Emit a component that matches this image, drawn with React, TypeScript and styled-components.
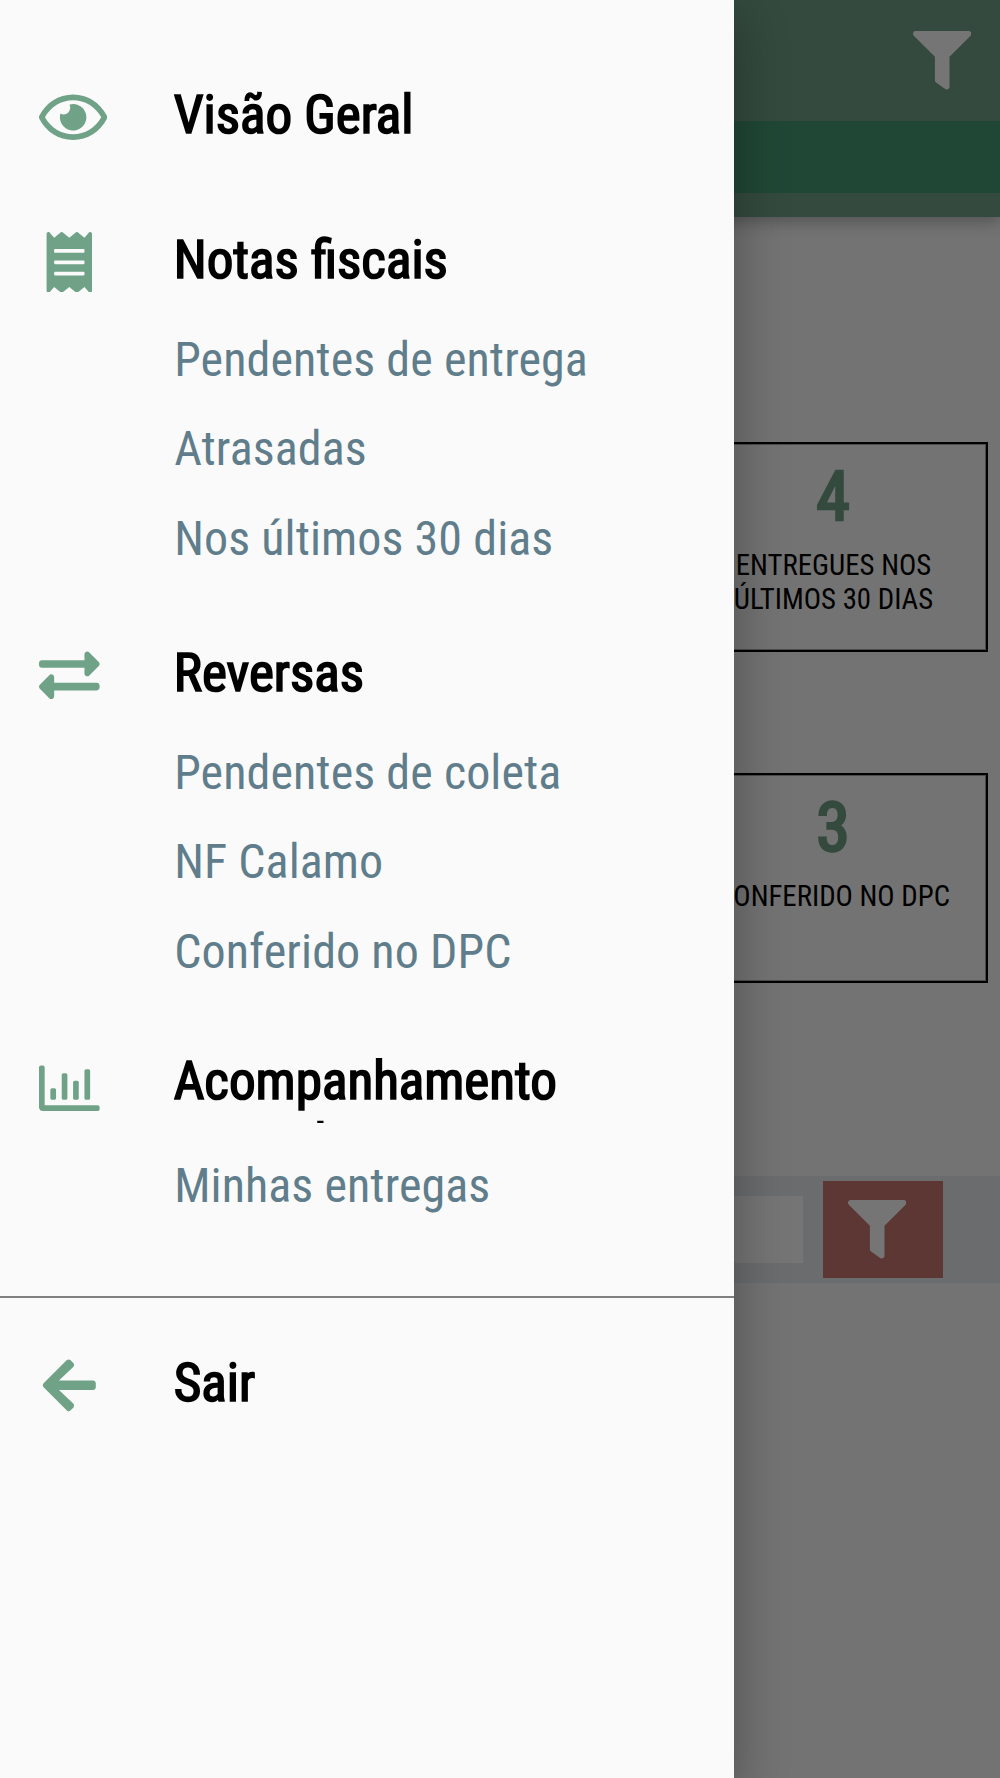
import React from "react";
import styled, { createGlobalStyle } from "styled-components";
import {
  FaArrowLeft,
  FaExchangeAlt,
  FaFilter,
  FaReceipt,
  FaRegChartBar,
  FaRegEye,
} from "react-icons/fa";

const green = "#70a288";

const GlobalStyle = createGlobalStyle`
  * { box-sizing: border-box; }
  body {
    margin: 0;
    font-family: "Roboto Condensed", Roboto, "Liberation Sans", sans-serif;
  }
  svg { display: block; flex: none; }
`;

const Screen = styled.div`
  position: relative;
  width: 1000px;
  height: 1778px;
  overflow: hidden;
  background: #fafafa;
`;

/* page behind the drawer */

const Page = styled.main`
  height: 100%;
  display: flex;
  flex-direction: column;
`;

const Header = styled.header`
  flex: none;
  height: 217.4px;
  background: #71a187;
  box-shadow: 0 4px 16px rgba(0, 0, 0, 0.3);
`;

const Toolbar = styled.div`
  height: 121px;
  display: flex;
  align-items: center;
  justify-content: flex-end;
  padding-right: 28.8px;
  color: #fff;
`;

const Band = styled.div`
  height: 72px;
  background: #469c75;
`;

const Cards = styled.section`
  display: flex;
  flex-direction: column;
  align-items: flex-end;
  gap: 121px;
  padding: 224.6px 12px 0 0;
`;

const Card = styled.article`
  width: 310px;
  height: 210px;
  padding-top: 13px;
  border: 2px solid #000;
  box-shadow: inset 0 0 0 1px rgba(0, 0, 0, 0.35);
  text-align: center;
`;

const Count = styled.div`
  font-size: 68px;
  line-height: 80px;
  font-weight: 400;
  color: #71a187;
  -webkit-text-stroke: 2.6px #71a187;
`;

const Caption = styled.div`
  width: 240px;
  margin: 12px auto 0;
  padding-left: 1px;
  font-size: 28.8px;
  line-height: 33.8px;
  color: #000;
`;

const SearchBar = styled.div`
  flex: none;
  height: 107px;
  margin-top: 193px;
  display: flex;
  align-items: center;
  justify-content: flex-end;
  padding-right: 57px;
  gap: 19.5px;
  background: #e9ecef;
`;

const SearchField = styled.div`
  width: 300px;
  height: 67.5px;
  background: #fff;
`;

const FilterButton = styled.div`
  width: 120.3px;
  height: 97px;
  padding: 19.5px 0 0 25px;
  background: #c8786f;
  color: #fff;
`;

const Overlay = styled.div`
  position: absolute;
  inset: 0;
  background: rgba(0, 0, 0, 0.54);
`;

/* drawer */

const Drawer = styled.nav`
  position: absolute;
  top: 0;
  left: 0;
  width: 734.3px;
  height: 100%;
  padding-top: 63.5px;
  background: #fafafa;
  box-shadow: 0 16px 48px 2px rgba(0, 0, 0, 0.3);
`;

const Section = styled.section`
  margin-bottom: 38.5px;
`;

const Heading = styled.div`
  height: 106.4px;
  display: flex;
  align-items: center;
  padding-left: 39px;
`;

const IconBox = styled.span<{ $wide?: boolean }>`
  width: 61px;
  margin-right: 73.7px;
  padding-top: 0.6px;
  display: flex;
  justify-content: ${(p) => (p.$wide ? "flex-start" : "center")};
  color: ${green};
`;

const EyeIcon = styled(FaRegEye)`
  width: 68.2px;
  height: 60.6px;
`;

const Title = styled.h2`
  width: 400px;
  max-height: 72.8px;
  margin: 0 0 2.4px;
  overflow: hidden;
  font-size: 53.2px;
  line-height: 62.6px;
  font-weight: 400;
  color: #000;
  -webkit-text-stroke: 1.7px #000;
`;

const Item = styled.div`
  height: 89.4px;
  padding-left: 174.2px;
  font-size: 48px;
  line-height: 89.4px;
  letter-spacing: 0.09px;
  color: #607d8b;
`;

const Divider = styled.hr`
  height: 2px;
  margin: 65.6px 0 33.8px;
  border: 0;
  background: #808080;
`;

type MenuSection = {
  title: string;
  icon: React.ReactNode;
  wideIcon?: boolean;
  items: string[];
};

const menu: MenuSection[] = [
  { title: "Visão Geral", icon: <EyeIcon />, wideIcon: true, items: [] },
  {
    title: "Notas fiscais",
    icon: <FaReceipt size={60.6} />,
    items: ["Pendentes de entrega", "Atrasadas", "Nos últimos 30 dias"],
  },
  {
    title: "Reversas",
    icon: <FaExchangeAlt size={60.6} />,
    items: ["Pendentes de coleta", "NF Calamo", "Conferido no DPC"],
  },
  {
    title: "Acompanhamento mensal",
    icon: <FaRegChartBar size={60.6} />,
    items: ["Minhas entregas"],
  },
];

export default function App() {
  return (
    <>
      <GlobalStyle />
      <Screen>
        <Page>
          <Header>
            <Toolbar>
              <FaFilter size={58.4} />
            </Toolbar>
            <Band />
          </Header>
          <Cards>
            <Card>
              <Count>4</Count>
              <Caption>ENTREGUES NOS ÚLTIMOS 30 DIAS</Caption>
            </Card>
            <Card>
              <Count>3</Count>
              <Caption>CONFERIDO NO DPC</Caption>
            </Card>
          </Cards>
          <SearchBar>
            <SearchField />
            <FilterButton>
              <FaFilter size={58.4} />
            </FilterButton>
          </SearchBar>
        </Page>
        <Overlay />
        <Drawer>
          {menu.map((section) => (
            <Section key={section.title}>
              <Heading>
                <IconBox $wide={section.wideIcon}>{section.icon}</IconBox>
                <Title>{section.title}</Title>
              </Heading>
              {section.items.map((item) => (
                <Item key={item}>{item}</Item>
              ))}
            </Section>
          ))}
          <Divider />
          <Heading>
            <IconBox>
              <FaArrowLeft size={60.6} />
            </IconBox>
            <Title>Sair</Title>
          </Heading>
        </Drawer>
      </Screen>
    </>
  );
}
